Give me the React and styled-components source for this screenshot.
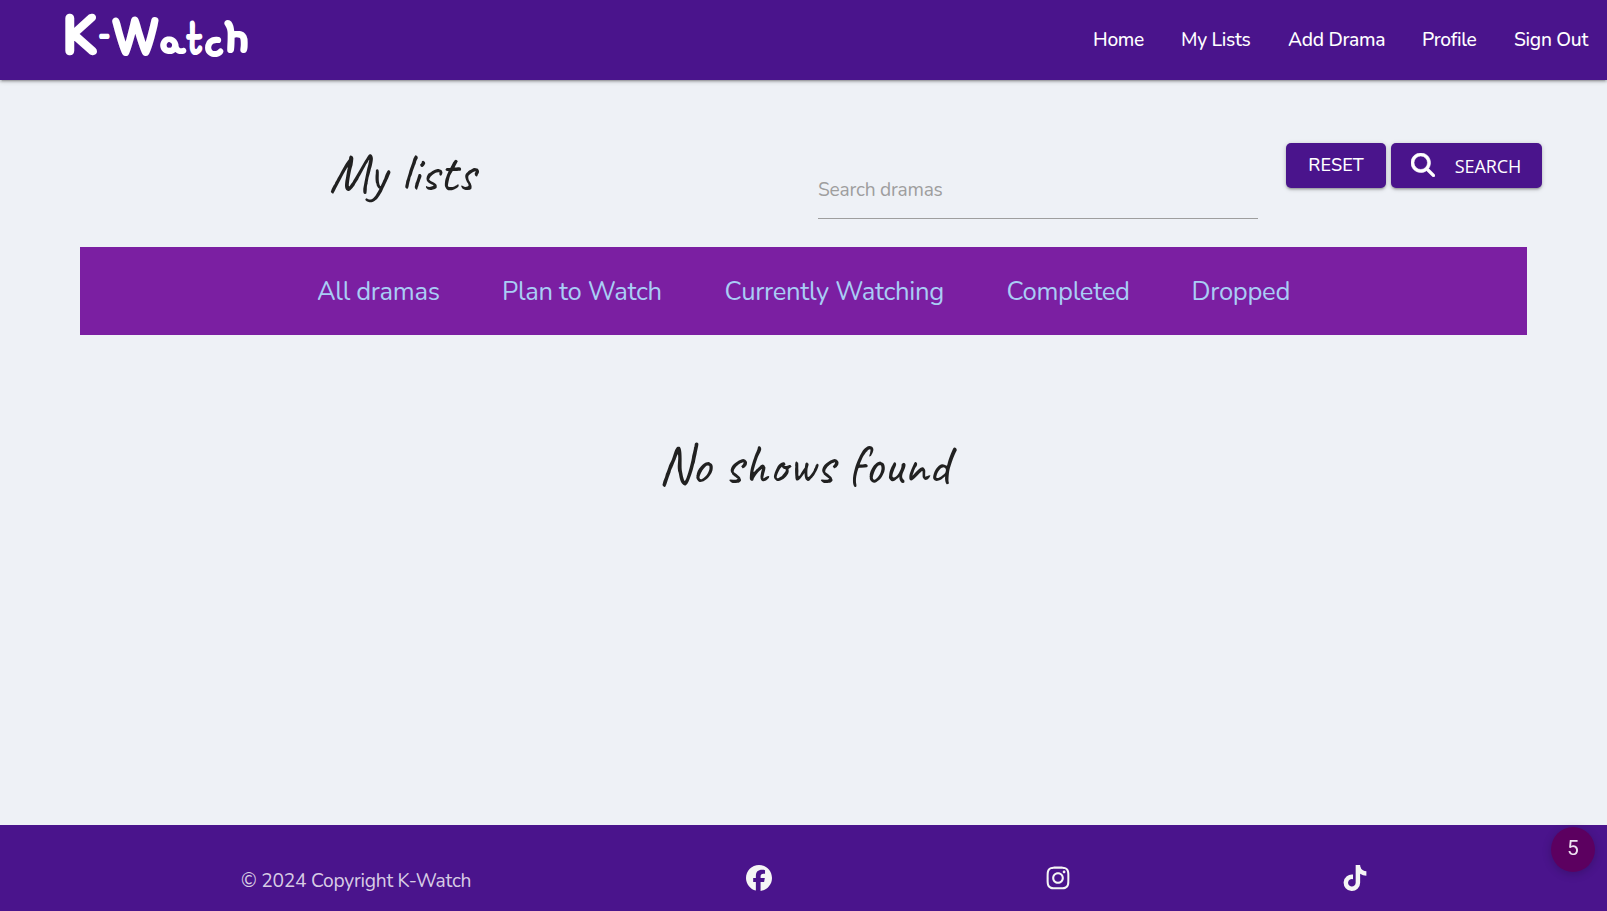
import React from "react";
import styled, { createGlobalStyle } from "styled-components";
import { FaFacebook, FaInstagram, FaTiktok, FaMagnifyingGlass } from "react-icons/fa6";

const GlobalStyle = createGlobalStyle`
  * { box-sizing: border-box; }
  body {
    margin: 0;
    background: #eef1f6;
    color: #212121;
    font-family: Nunito, Lato, "Open Sans", sans-serif;
  }
`;

const Page = styled.div`
  display: flex;
  flex-direction: column;
  height: 911px;
  overflow: hidden;
`;

const Header = styled.header`
  display: flex;
  justify-content: space-between;
  flex: none;
  height: 80px;
  padding: 0 18px 0 60px;
  background: #4a148c;
  box-shadow: 0 2px 2px 0 rgba(0, 0, 0, 0.14), 0 3px 1px -2px rgba(0, 0, 0, 0.12),
    0 1px 5px 0 rgba(0, 0, 0, 0.2);
`;

const Logo = styled.svg`
  width: 200px;
  height: 78px;
  overflow: visible;
  fill: #fff;
  stroke: #fff;
  stroke-linejoin: round;
  stroke-linecap: round;
  font-family: "Gamja Flower", Nunito, Lato, sans-serif;
`;

const RoundLetter = styled.tspan`
  font-family: Nunito, Lato, sans-serif;
`;

const Nav = styled.nav`
  display: flex;
  gap: 37px;
`;

const NavLink = styled.a`
  width: ${(p) => p.$width}px;
  color: #fff;
  font-size: 19.2px;
  font-weight: 500;
  line-height: 81px;
  letter-spacing: -0.28px;
  white-space: nowrap;
`;

const Main = styled.main`
  flex: 1;
  padding: 63px 80px 0;
`;

const TopRow = styled.div`
  display: flex;
  height: 104px;
  margin-right: -15px;
`;

const Script = styled.h1`
  margin: 0;
  width: ${(p) => p.$width}px;
  font-family: Caveat, Nunito, Lato, cursive;
  font-size: 55px;
  font-weight: 400;
  line-height: 60px;
  white-space: nowrap;
`;

const TitleCell = styled.div`
  width: 738px;
  padding: 0 0 0 249px;
`;

const SearchField = styled.input`
  width: 440px;
  height: 58px;
  margin: 18px 28px 0 0;
  padding: 0;
  border: 0;
  border-bottom: 1px solid #9e9e9e;
  background: transparent;
  outline: none;
  font: 19.2px Nunito, Lato, sans-serif;
  letter-spacing: -0.23px;
  &::placeholder { color: #9e9e9e; }
`;

const Buttons = styled.div`
  display: flex;
  gap: 5px;
`;

const Button = styled.button`
  display: flex;
  align-items: center;
  justify-content: center;
  gap: 20px;
  width: ${(p) => p.$width}px;
  height: 45px;
  padding: 0 0 ${(p) => p.$lift || 0}px;
  border: 0;
  border-radius: 5px;
  background: #4a148c;
  color: #fff;
  font-family: ${(p) => p.$font || "Nunito, Lato, sans-serif"};
  font-size: 18px;
  font-weight: ${(p) => p.$weight || 400};
  letter-spacing: ${(p) => p.$track}px;
  box-shadow: 0 2px 2px 0 rgba(0, 0, 0, 0.14), 0 3px 1px -2px rgba(0, 0, 0, 0.12),
    0 1px 5px 0 rgba(0, 0, 0, 0.2);
  svg {
    width: 24px;
    height: 24px;
    margin: -2px 0 0 -1px;
    stroke: #fff;
    stroke-width: 12px;
  }
`;

const Tabs = styled.nav`
  display: flex;
  gap: 63px;
  height: 88px;
  padding-left: 237px;
  background: #7b1fa2;
`;

const Tab = styled.a`
  width: ${(p) => p.$width}px;
  color: #a9cdf5;
  font-size: 25.6px;
  line-height: 89px;
  letter-spacing: -0.3px;
  white-space: nowrap;
`;

const Empty = styled.section`
  padding: 100px 0 0 578px;
`;

const Footer = styled.footer`
  display: flex;
  flex: none;
  height: 86px;
  padding: 40px 0 0 241px;
  background: #4a148c;
  color: #f5f5f5;
  svg { display: block; width: 26px; height: 26px; }
`;

const Copyright = styled.div`
  width: 505px;
  color: rgba(255, 255, 255, 0.8);
  font-size: 19.2px;
  line-height: 33px;
  letter-spacing: -0.23px;
`;

const Social = styled.a`
  width: ${(p) => p.$width}px;
  color: #f5f5f5;
`;

const Badge = styled.div`
  position: fixed;
  left: 1551px;
  top: 827px;
  width: 44px;
  height: 45px;
  border-radius: 50%;
  background: #5c0060;
  color: #eee0f0;
  font: 21px/43px Roboto, sans-serif;
  text-align: center;
  box-shadow: 0 2px 10px rgba(0, 0, 0, 0.2);
`;

const links = [
  ["Home", 51],
  ["My Lists", 70],
  ["Add Drama", 97],
  ["Profile", 55],
  ["Sign Out", 75],
];

const tabs = [
  ["All dramas", 122],
  ["Plan to Watch", 159.5],
  ["Currently Watching", 219],
  ["Completed", 122],
  ["Dropped", 98],
];

export default function App() {
  return (
    <Page>
      <GlobalStyle />
      <Header>
        <Logo viewBox="0 0 200 78" aria-label="K-Watch">
          <text strokeWidth="2.2" fontSize="71">
            <RoundLetter x="3" y="52.5" fontSize="53" strokeWidth="4.5">K</RoundLetter>
            <tspan x="39" y="48" fontSize="40" textLength="11" lengthAdjust="spacingAndGlyphs">-</tspan>
            <tspan x="51" y="53.5" textLength="49" lengthAdjust="spacingAndGlyphs">W</tspan>
            <tspan x="100" y="53.5" fontSize="54" textLength="26" lengthAdjust="spacingAndGlyphs">a</tspan>
            <tspan x="126" y="51.5" fontSize="54" textLength="18" lengthAdjust="spacingAndGlyphs">t</tspan>
            <tspan x="144" y="54.5" fontSize="54" textLength="20" lengthAdjust="spacingAndGlyphs">c</tspan>
            <tspan x="164" y="51" fontSize="58" textLength="25" lengthAdjust="spacingAndGlyphs">h</tspan>
          </text>
        </Logo>
        <Nav>
          {links.map(([label, width]) => (
            <NavLink key={label} $width={width}>{label}</NavLink>
          ))}
        </Nav>
      </Header>
      <Main>
        <TopRow>
          <TitleCell>
            <Script $width={160}>My lists</Script>
          </TitleCell>
          <SearchField placeholder="Search dramas" />
          <Buttons>
            <Button $width={100} $track={0.1} $lift={1} $weight={500}>RESET</Button>
            <Button $width={151} $track={-0.1} $font={'"Segoe UI", "Open Sans", sans-serif'}>
              <FaMagnifyingGlass />
              <span>SEARCH</span>
            </Button>
          </Buttons>
        </TopRow>
        <Tabs>
          {tabs.map(([label, width]) => (
            <Tab key={label} $width={width}>{label}</Tab>
          ))}
        </Tabs>
        <Empty>
          <Script as="h2" $width={300}>No shows found</Script>
        </Empty>
      </Main>
      <Footer>
        <Copyright>© 2024 Copyright K-Watch</Copyright>
        <Social $width={299}><FaFacebook /></Social>
        <Social $width={297}><FaInstagram /></Social>
        <Social $width={30}><FaTiktok /></Social>
      </Footer>
      <Badge>5</Badge>
    </Page>
  );
}
